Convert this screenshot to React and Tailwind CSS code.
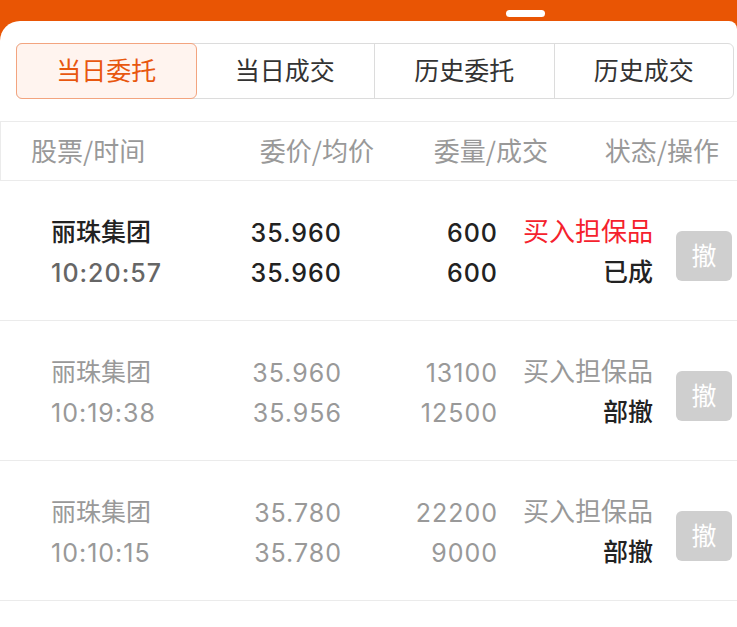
import React from "react";

const tabs = ["当日委托", "当日成交", "历史委托", "历史成交"];

const orders = [
  {
    name: "丽珠集团",
    time: "10:20:57",
    price: "35.960",
    avg: "35.960",
    qty: "600",
    done: "600",
    side: "买入担保品",
    status: "已成",
    active: true,
  },
  {
    name: "丽珠集团",
    time: "10:19:38",
    price: "35.960",
    avg: "35.956",
    qty: "13100",
    done: "12500",
    side: "买入担保品",
    status: "部撤",
  },
  {
    name: "丽珠集团",
    time: "10:10:15",
    price: "35.780",
    avg: "35.780",
    qty: "22200",
    done: "9000",
    side: "买入担保品",
    status: "部撤",
  },
];

// CJK glyphs sit a bit low in Noto, so CJK lines use a shorter box + bottom pad
const cjk = "font-['Noto_Sans_CJK_SC',sans-serif]";
const cjkLine = "leading-[34px] pb-[6px]";
const num = "font-['Inter','Noto_Sans_CJK_SC',sans-serif] tracking-[1px]";

const OrderRow = ({ o }) => {
  const muted = !o.active;
  return (
    <div className="flex items-start h-[140px] pt-[32px] pl-[51px] border-b border-[#ebebeb]">
      <div className="w-[150px] text-[25px]">
        <div className={`${cjk} ${cjkLine} ${muted ? "text-[#999]" : "text-[#222] font-medium"}`}>{o.name}</div>
        <div className={`${num} leading-[40px] ${muted ? "text-[#999]" : "text-[#666] font-medium"}`}>{o.time}</div>
      </div>
      <div className={`w-[140px] text-right text-[25px] leading-[40px] ${num} ${muted ? "text-[#999]" : "text-[#222] font-medium"}`}>
        <div className="-mr-[1px]">{o.price}</div>
        <div className="-mr-[1px]">{o.avg}</div>
      </div>
      <div className={`w-[156px] text-right text-[25px] leading-[40px] ${num} ${muted ? "text-[#999]" : "text-[#222] font-medium"}`}>
        <div className="-mr-[1px]">{o.qty}</div>
        <div className="-mr-[1px]">{o.done}</div>
      </div>
      <div className={`w-[156px] text-right ${cjk}`}>
        <div className={`text-[26px] ${cjkLine} ${muted ? "text-[#999]" : "text-[#f5222d]"}`}>{o.side}</div>
        <div className={`text-[25px] ${cjkLine} text-[#222] font-medium`}>{o.status}</div>
      </div>
      <button className={`ml-[23px] mt-[18px] w-[56px] h-[50px] pb-[3px] rounded-[6px] bg-[#cfcfcf] text-white text-[25px] ${cjk}`}>
        撤
      </button>
    </div>
  );
};

export default function App() {
  return (
    <div className="w-[737px] h-[627px] bg-[#e95504] overflow-hidden">
      <div className="h-[21px] flex items-start pt-[10px] pl-[506px]">
        <div className="w-[39px] h-[7px] rounded-full bg-white" />
      </div>
      <div className="bg-white rounded-tl-[20px] rounded-tr-[8px] h-[606px] pt-[22px]">
        <div className="ml-[16px] mr-[3px] h-[56px] flex border border-[#dcdcdc] rounded-[6px]">
          {tabs.map((t, i) => (
            <div
              key={t}
              className={`flex-1 flex items-center justify-center pb-[2px] text-[25px] ${cjk} ${
                i === 0
                  ? "bg-[#fff4ef] text-[#e8570f] border border-[#f3a47f] rounded-[6px] -m-px"
                  : "text-[#333] border-l border-[#dcdcdc]"
              } ${i === 1 ? "border-l-0" : ""}`}
            >
              {t}
            </div>
          ))}
        </div>

        <div className={`mt-[22px] h-[60px] pb-[4px] flex items-center border-y border-l border-[#ebebeb] text-[26px] text-[#999] ${cjk}`}>
          <div className="pl-[30px] w-[200px]">股票/时间</div>
          <div className="w-[173px] text-right">委价/均价</div>
          <div className="w-[174px] text-right">委量/成交</div>
          <div className="w-[171px] text-right">状态/操作</div>
        </div>

        {orders.map((o, i) => (
          <OrderRow key={i} o={o} />
        ))}
      </div>
    </div>
  );
}
